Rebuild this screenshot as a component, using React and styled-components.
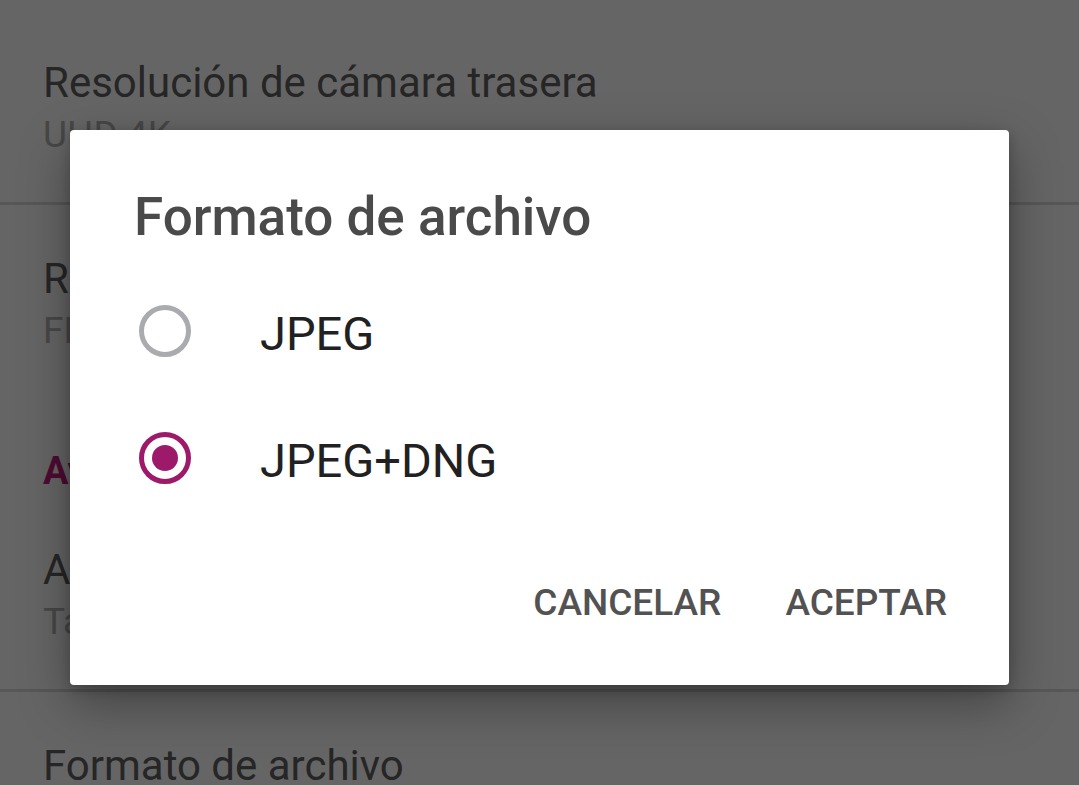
import React from "react";
import styled, { createGlobalStyle } from "styled-components";

const Global = createGlobalStyle`
  html, body {
    margin: 0;
    padding: 0;
    background: #656565;
  }
  body {
    font-family: Roboto, "Noto Sans", "Liberation Sans", sans-serif;
  }
`;

const Screen = styled.div`
  position: relative;
  width: 1079px;
  height: 785px;
  overflow: hidden;
  background: #656565;
`;

const List = styled.div`
  display: flex;
  flex-direction: column;
  padding-top: 59px;
`;

const Item = styled.div`
  display: flex;
  flex-direction: column;
  gap: 6px;
  padding: ${(p) => (p.$first ? "0" : "50px")} 43px 45px;
  border-bottom: ${(p) => (p.$divider ? "3px solid #575757" : "none")};
`;

const ItemTitle = styled.div`
  font-size: 42px;
  line-height: 48px;
  color: #262626;
  white-space: nowrap;
`;

const ItemSub = styled.div`
  font-size: 37px;
  line-height: 44px;
  color: #474747;
  white-space: nowrap;
`;

const Category = styled.div`
  padding: 48px 43px 0;
  font-size: 38px;
  line-height: 50px;
  font-weight: 700;
  color: #4e0b31;
`;

const Dialog = styled.div`
  position: absolute;
  left: 70px;
  top: 130px;
  width: 939px;
  height: 555px;
  box-sizing: border-box;
  background: #ffffff;
  border-radius: 4px;
  box-shadow: 0 18px 50px rgba(0, 0, 0, 0.35), 0 4px 12px rgba(0, 0, 0, 0.2);
  display: flex;
  flex-direction: column;
  padding: 57px 0 0;
`;

const DialogTitle = styled.div`
  padding-left: 64px;
  font-size: 53px;
  line-height: 60px;
  font-weight: 500;
  color: #4a4a4a;
`;

const Options = styled.div`
  display: flex;
  flex-direction: column;
  margin-top: 20px;
`;

const Option = styled.div`
  display: flex;
  align-items: center;
  height: 127px;
  padding-left: 69px;
`;

const Radio = styled.div`
  width: 52px;
  height: 52px;
  box-sizing: border-box;
  border-radius: 50%;
  border: 5px solid ${(p) => (p.$checked ? "#9c1a69" : "#aaabae")};
  display: flex;
  align-items: center;
  justify-content: center;
  flex-shrink: 0;
`;

const Dot = styled.div`
  width: 26px;
  height: 26px;
  border-radius: 50%;
  background: #9c1a69;
`;

const Label = styled.div`
  margin-left: 69px;
  margin-top: 7px;
  font-size: 47px;
  line-height: 56px;
  color: #212121;
`;

const Actions = styled.div`
  display: flex;
  justify-content: flex-end;
  gap: 64px;
  padding: 60px 62px 0 0;
`;

const Action = styled.button`
  border: none;
  background: none;
  padding: 0;
  font-family: Roboto, "Liberation Sans", sans-serif;
  font-size: 37px;
  line-height: 44px;
  font-weight: 500;
  color: #525252;
  cursor: pointer;
`;

const options = [
  { label: "JPEG", checked: false },
  { label: "JPEG+DNG", checked: true },
];

export default function App() {
  return (
    <Screen>
      <Global />
      <List>
        <Item $first $divider>
          <ItemTitle>Resolución de cámara trasera</ItemTitle>
          <ItemSub>UHD 4K</ItemSub>
        </Item>
        <Item>
          <ItemTitle>Resolución de vídeo trasero</ItemTitle>
          <ItemSub>FHD 1080p</ItemSub>
        </Item>
        <Category>Avanzado</Category>
        <Item $divider>
          <ItemTitle>Almacenamiento</ItemTitle>
          <ItemSub>Tarjeta SD</ItemSub>
        </Item>
        <Item>
          <ItemTitle>Formato de archivo</ItemTitle>
          <ItemSub>JPEG+DNG</ItemSub>
        </Item>
      </List>
      <Dialog>
        <DialogTitle>Formato de archivo</DialogTitle>
        <Options>
          {options.map((o) => (
            <Option key={o.label}>
              <Radio $checked={o.checked}>{o.checked && <Dot />}</Radio>
              <Label>{o.label}</Label>
            </Option>
          ))}
        </Options>
        <Actions>
          <Action>CANCELAR</Action>
          <Action>ACEPTAR</Action>
        </Actions>
      </Dialog>
    </Screen>
  );
}
